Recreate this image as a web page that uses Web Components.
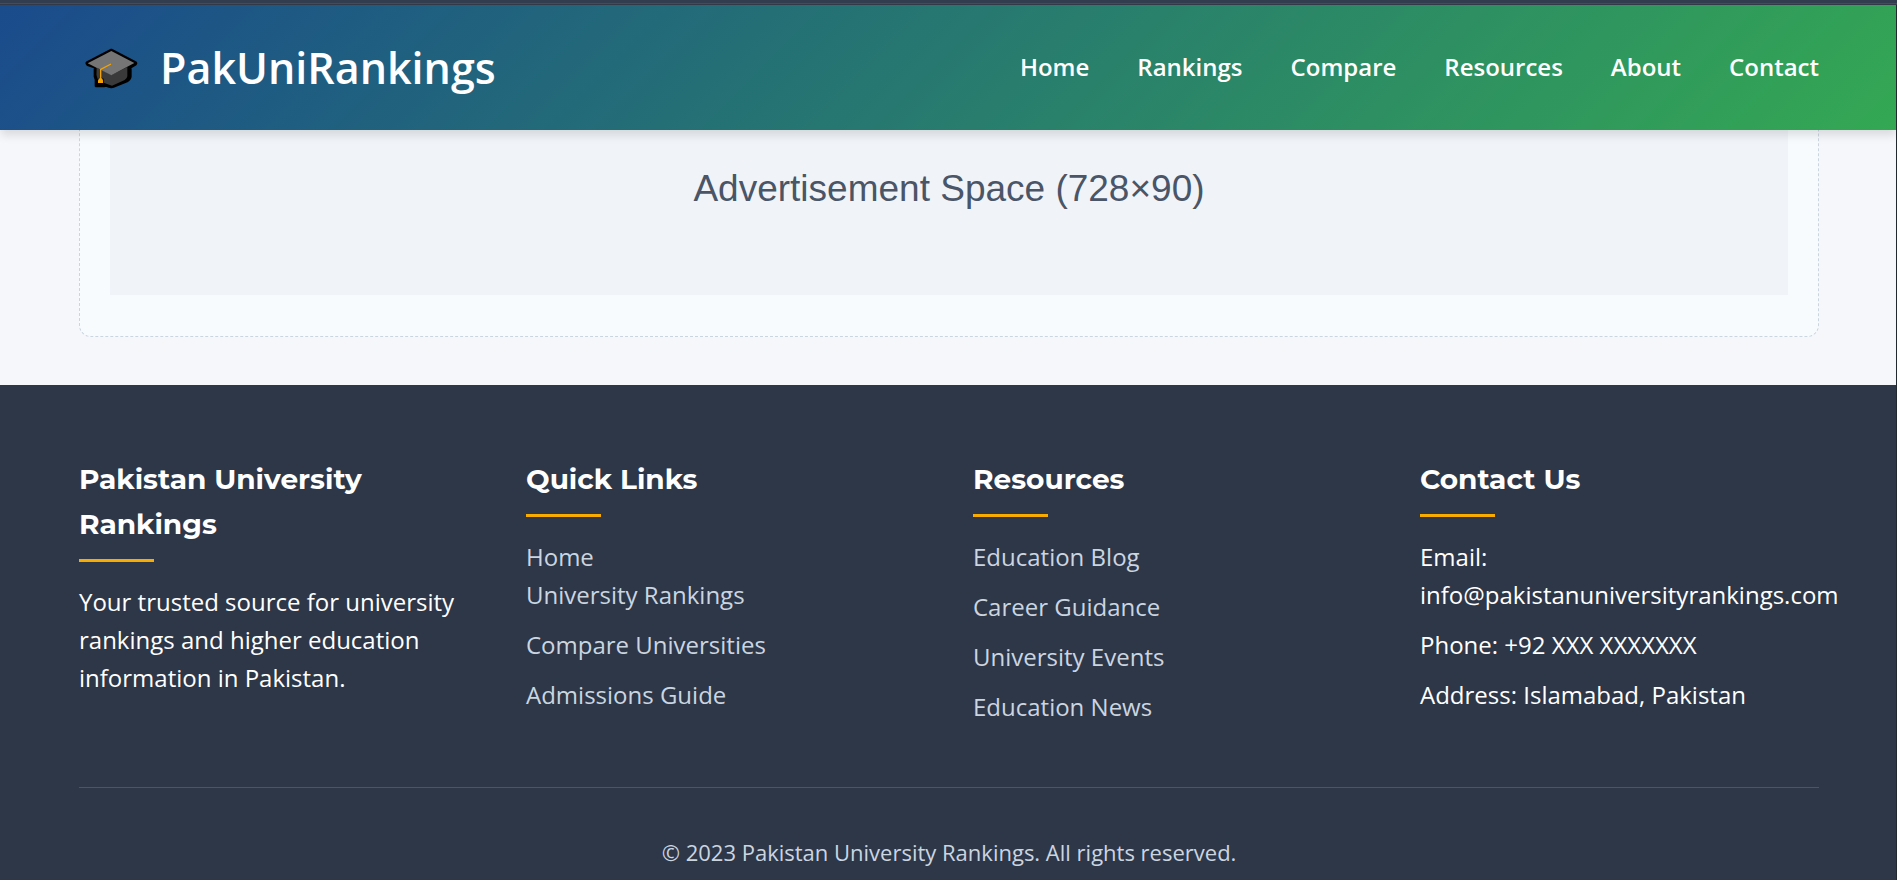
<!DOCTYPE html>
<html lang="en">
<head>
<meta charset="utf-8">
<meta name="viewport" content="width=device-width, initial-scale=1">
<title>PakUniRankings</title>
<style>
  :root {
    --gutter-start: 79px;
    --gutter-end: 78px;
    --dark: #2d3748;
    --muted: #cbd5e0;
    --accent: #f9ab00;
  }
  body {
    margin: 0;
    background: #f5f7fb;
    color: #fff;
    font: 24px/38px "Open Sans", "Noto Sans", sans-serif;
    overflow-x: hidden;
  }
</style>
</head>
<body>
<uni-page>
  <site-header slot="header">
    <nav-link href="#home">Home</nav-link>
    <nav-link href="#rankings">Rankings</nav-link>
    <nav-link href="#compare">Compare</nav-link>
    <nav-link href="#resources">Resources</nav-link>
    <nav-link href="#about">About</nav-link>
    <nav-link href="#contact">Contact</nav-link>
  </site-header>
  <ad-banner>Advertisement Space (728×90)</ad-banner>
  <site-footer slot="footer">
    <footer-column heading="Pakistan University Rankings">
      <footer-item>Your trusted source for university rankings and higher education information in Pakistan.</footer-item>
    </footer-column>
    <footer-column heading="Quick Links">
      <footer-item href="#home" tight>Home</footer-item>
      <footer-item href="#rankings">University Rankings</footer-item>
      <footer-item href="#compare">Compare Universities</footer-item>
      <footer-item href="#admissions">Admissions Guide</footer-item>
    </footer-column>
    <footer-column heading="Resources">
      <footer-item href="#blog">Education Blog</footer-item>
      <footer-item href="#careers">Career Guidance</footer-item>
      <footer-item href="#events">University Events</footer-item>
      <footer-item href="#news">Education News</footer-item>
    </footer-column>
    <footer-column heading="Contact Us">
      <footer-item>Email: info@pakistanuniversityrankings.com</footer-item>
      <footer-item>Phone: +92 XXX XXXXXXX</footer-item>
      <footer-item>Address: Islamabad, Pakistan</footer-item>
    </footer-column>
    <span slot="legal">© 2023 Pakistan University Rankings. All rights reserved.</span>
  </site-footer>
</uni-page>

<script>
const define = (name, render) => customElements.define(name, class extends HTMLElement {
  constructor() {
    super();
    this.attachShadow({ mode: 'open' });
  }
  connectedCallback() {
    this.shadowRoot.innerHTML = render(this);
  }
});

define('uni-page', () => `
  <style>
    :host { display: flex; flex-direction: column; min-height: 100vh; position: relative; }
    .strip { height: 3px; background: #323e4f; border-bottom: 1px solid #454e58; box-shadow: 0 1px #323b47; margin-bottom: 1px; }
    .edge { position: absolute; top: 5px; right: 0; bottom: 0; width: 1px; background: #22282f; z-index: 2; }
    main { margin-top: -73px; padding: 0 var(--gutter-end) 48px var(--gutter-start); }
    ::slotted([slot="footer"]) { flex: 1; }
  </style>
  <div class="strip"></div>
  <slot name="header"></slot>
  <main><slot></slot></main>
  <slot name="footer"></slot>
  <div class="edge"></div>
`);

define('site-header', () => `
  <style>
    :host {
      display: flex; justify-content: space-between; align-items: center;
      position: relative; z-index: 1; box-sizing: border-box; min-height: 125px;
      padding: 0 var(--gutter-end) 0 var(--gutter-start);
      background: linear-gradient(135deg, #1a4b8c, #34a853);
      box-shadow: 0 6px 9px -1px rgba(0, 0, 0, .12);
    }
    .logo { display: flex; align-items: center; gap: 21px; color: #fff; text-decoration: none; font-size: 43px; font-weight: 600; line-height: 60px; }
    svg { display: block; width: 60px; height: 48px; }
    nav { display: flex; gap: 48px; padding-bottom: 2px; }
  </style>
  <a class="logo" href="#home">
    <svg viewBox="27 26 180 144" aria-hidden="true">
      <path d="M124 44 196 81Q200 84 196 87L181 96V124Q180 132 171 137L132 153Q124 157 115 153L103 148V152H78V133L75 124V96L53 88Q48 84 52 81Z" fill="#000" stroke="#000" stroke-width="8" stroke-linejoin="round"/>
      <path d="M80 96 124 119 172 95V123Q171 130 164 134L126 151 101 142V130L80 119Z" fill="#3a3a3a"/>
      <path d="M124 47 193 83 124 120 53 84Z" fill="#757575"/>
      <path d="M81 97 91 102V128L83 131 80 121Z" fill="#3a3a3a"/>
      <path d="M123 86 92 102V132" fill="none" stroke="#f5a300" stroke-width="4"/>
      <path d="M88 129H96L99 135V143H84V135Z" fill="#f5a300"/>
    </svg>
    <span>PakUniRankings</span>
  </a>
  <nav aria-label="Main"><slot></slot></nav>
`);

define('nav-link', el => `
  <style>
    :host { display: block; }
    a { color: #fff; font-weight: 600; text-decoration: none; }
  </style>
  <a href="${el.getAttribute('href')}"><slot></slot></a>
`);

define('ad-banner', () => `
  <style>
    :host { display: block; padding: 30px 30px 41px; border: 1px dashed var(--muted); border-radius: 12px; background: #f7fbfe; }
    .space {
      display: flex; align-items: center; justify-content: center; box-sizing: border-box; aspect-ratio: 728 / 90; padding-bottom: 6px;
      background: #f0f4f8; color: #4a5568; font: 37px/42px "Liberation Sans", Arial, sans-serif;
    }
  </style>
  <div class="space"><span><slot></slot></span></div>
`);

define('site-footer', () => `
  <style>
    :host { display: block; padding: 72px var(--gutter-end) 0 var(--gutter-start); background: var(--dark); }
    .columns { display: grid; grid-template-columns: repeat(4, minmax(0, 1fr)); gap: 48px; }
    .legal { margin-top: 49px; padding: 47px 0 8px; border-top: 1px solid #4a5568; color: var(--muted); text-align: center; font-size: 22px; line-height: 35px; }
  </style>
  <div class="columns"><slot></slot></div>
  <div class="legal"><slot name="legal"></slot></div>
`);

define('footer-column', el => `
  <style>
    :host { display: block; }
    h2 { margin: 0 0 21px; font: 700 28px/45px Montserrat, Inter, sans-serif; }
    h2::after { content: ""; display: block; width: 75px; height: 3px; margin-top: 12px; background: var(--accent); }
  </style>
  <h2>${el.getAttribute('heading')}</h2>
  <slot></slot>
`);

define('footer-item', el => `
  <style>
    :host { display: block; margin-bottom: 12px; }
    :host([tight]) { margin-bottom: 0; }
    a { color: var(--muted); text-decoration: none; }
  </style>
  ${el.hasAttribute('href') ? `<a href="${el.getAttribute('href')}"><slot></slot></a>` : '<slot></slot>'}
`);
</script>
</body>
</html>
